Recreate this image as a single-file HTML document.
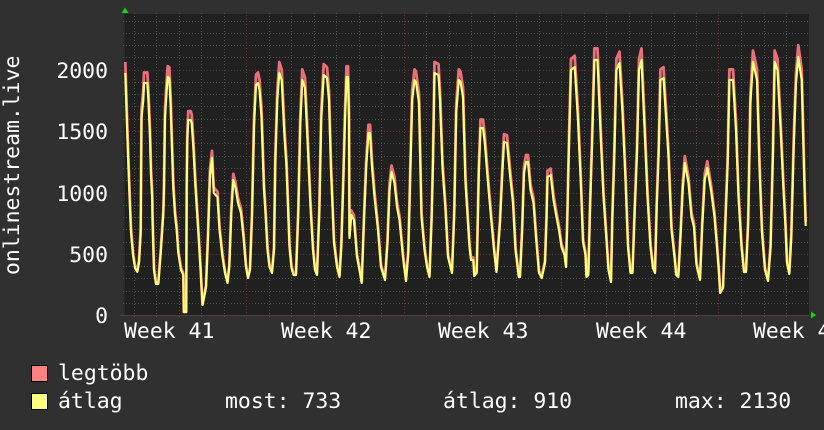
<!DOCTYPE html>
<html><head><meta charset="utf-8"><title>onlinestream.live</title>
<style>html,body{margin:0;padding:0;background:#303030;overflow:hidden}svg{display:block}
text{font-family:"DejaVu Sans Mono","Liberation Mono",monospace;font-size:21.45px;fill:#fff}</style></head>
<body>
<svg xmlns="http://www.w3.org/2000/svg" width="824" height="430" viewBox="0 0 824 430">
<rect width="824" height="430" fill="#303030"/>
<rect x="124" y="14" width="685" height="301" fill="#202020"/>
<rect x="123" y="14" width="2" height="301" fill="#2a2a2a"/>
<g shape-rendering="crispEdges" fill="none">
<path stroke="#505050" stroke-dasharray="1 2" d="M123 21.5H809M123 33.5H809M123 45.5H809M123 57.5H809M123 82.5H809M123 94.5H809M123 106.5H809M123 119.5H809M123 143.5H809M123 156.5H809M123 168.5H809M123 180.5H809M123 205.5H809M123 217.5H809M123 229.5H809M123 242.5H809M123 266.5H809M123 278.5H809M123 291.5H809M123 303.5H809"/>
<path stroke="#505050" stroke-dasharray="1 2" d="M134.5 13V317M156.5 13V317M179.5 13V317M201.5 13V317M224.5 13V317M269.5 13V317M291.5 13V317M314.5 13V317M336.5 13V317M359.5 13V317M381.5 13V317M426.5 13V317M449.5 13V317M471.5 13V317M494.5 13V317M516.5 13V317M539.5 13V317M584.5 13V317M606.5 13V317M629.5 13V317M651.5 13V317M674.5 13V317M696.5 13V317M741.5 13V317M764.5 13V317M786.5 13V317"/>
<path stroke="#603636" stroke-dasharray="1 2" d="M120 70.5H809M120 131.5H809M120 193.5H809M120 254.5H809M246.5 12V319M404.5 12V319M561.5 12V319M718.5 12V319"/>
<path stroke="#504040" d="M120 315.5H809"/>
</g>
<defs>
<polyline id="l" fill="none" stroke-linejoin="round" points="125.3,73 127.5,140 129.5,195 131,232 133,255 135,268 137.3,272 139,263 140.7,233 141,190 141.5,118 143.3,100 144,83 147.3,83 148.3,98 150,137 151,175 152.3,200 152.5,218 154,270 156,284 158.3,284 160.7,253 163.3,215 164,190 165,118 166.7,90 167.7,77 169.3,78 170.7,107 171.7,140 173.3,188 175,215 176.7,230 178.3,253 181,270 183.3,275 183.8,312 186.2,312 186.7,190 187.3,140 188.3,120 190.7,120 191.7,123 193.5,150 195.5,188 198,227 200.5,268 202.5,305 204.5,295 206,287 208,237 210,175 212,158 213.8,193 217.5,197 219.5,230 222.5,257 225,273 227.5,283 229.3,267 231.3,213 233.3,180 235.5,188 238,203 241,213 243.5,237 246,267 248,278 250,270 252,217 254,127 256,85 258,83 259.5,90 261.5,117 264,190 265.5,213 267.5,250 269.5,267 272,273 274,250 275.3,163 277.3,100 279.3,73 281.7,80 284.5,137 286.5,167 289.5,247 291.5,268 293.5,275 296,275 298.3,213 300.2,127 302.3,80 305,88 307.5,140 310.5,207 313,250 315,270 317,275 319.3,213 321.2,120 323.7,75 327,78 329,100 331,170 334,243 337,267 339.5,277 341.3,247 343.3,183 345,120 346.5,77 348,77 349,120 349.5,238 351.3,215 354,220 357,257 359.5,270 361.7,283 364,220 366.2,167 368.5,133 370,133 372,167 374.5,197 378,230 381,267 385,280 387.5,243 389.5,190 391.5,172 394.5,183 397,207 399.5,220 403,257 406,281 408.3,253 410.3,173 412.2,100 414.5,80 416,82 419,103 421.5,217 424.5,250 427,267 429.5,277 431.7,217 433,163 434.5,73 438.5,75 440,100 442.5,168 445.5,210 448,257 452,273 454.3,213 456.2,113 458.8,80 460.5,82 463,97 465.5,183 469.5,247 471,260 473.3,260 474.3,276 476.7,273 478.8,173 480.5,128 483,128 484.8,143 488,183 491,217 494,250 496.5,272 500,223 502,180 504,142 507,143 510.5,180 513,203 515.5,250 518.8,277 520,277 522.2,230 524,173 526,162 528,162 530.5,190 533.5,203 536,237 539,273 541.7,278 545,263 546.5,220 547.5,177 550.7,175 553.5,200 556.5,217 559,230 561.5,247 564.5,255 566,267 567.3,220 568.7,157 571,70 574.7,67 578,120 581,187 583,242 585.5,255 586.5,277 588.3,275 590,210 592,147 594.4,60 597.5,60 601,143 603.5,197 606,233 608.5,270 611,282 612.3,220 614.3,157 616.4,70 619.5,63 622.5,113 625.5,180 628,247 630.5,273 632.5,273 634.5,217 637,153 639,70 641.5,60 644.5,127 647.5,197 650.5,247 653,268 655,273 656.7,207 658.7,153 660.4,80 663.5,78 666,117 668.5,157 671.5,230 674.5,257 676.2,275 678.3,277 680.5,237 682.7,190 684.8,163 688.5,183 691.5,217 694,227 696.5,265 700,280 702.2,227 704.7,180 707.3,168 711,190 714.5,217 717,247 719,273 720.2,293 723,288 725.5,220 727.7,163 729.4,80 733,80 736,130 738.5,197 741.5,247 744,272 746,272 748.2,223 750.4,103 753,62 757,80 759.5,167 762,233 765,270 768,281 770.6,247 773,153 774.7,62 777.5,70 780.5,127 783.5,190 785.5,227 787,263 789.3,274 791.3,237 793.7,147 796,83 798.3,57 801.7,80 804.5,187 805.7,226"/>
</defs>
<use href="#l" stroke="#e87078" stroke-width="2.8" transform="translate(0,315) scale(1,1.045) translate(0,-315)"/>
<use href="#l" stroke="#ffff78" stroke-width="2.2"/>
<polygon points="125,7.5 128.5,13 121.5,13" fill="#00e000"/>
<polygon points="811,311.5 816,315 811,318.5" fill="#00e000"/>
<text x="108" y="78" text-anchor="end">2000</text>
<text x="108" y="139" text-anchor="end">1500</text>
<text x="108" y="201" text-anchor="end">1000</text>
<text x="108" y="262" text-anchor="end">500</text>
<text x="108" y="323" text-anchor="end">0</text>
<text transform="translate(19,275) rotate(-90)">onlinestream.live</text>
<text x="124" y="338">Week 41</text>
<text x="281" y="338">Week 42</text>
<text x="438" y="338">Week 43</text>
<text x="596" y="338">Week 44</text>
<text x="753" y="338">Week 45</text>
<rect x="31.5" y="365.5" width="16" height="16" fill="#ff8080" stroke="#000"/>
<rect x="31.5" y="393.5" width="16" height="16" fill="#ffff80" stroke="#000"/>
<text x="58" y="380">legtöbb</text>
<text x="58" y="408">átlag</text>
<text x="225" y="408">most: 733</text>
<text x="443" y="408">átlag: 910</text>
<text x="675" y="408">max: 2130</text>
</svg>
</body></html>
